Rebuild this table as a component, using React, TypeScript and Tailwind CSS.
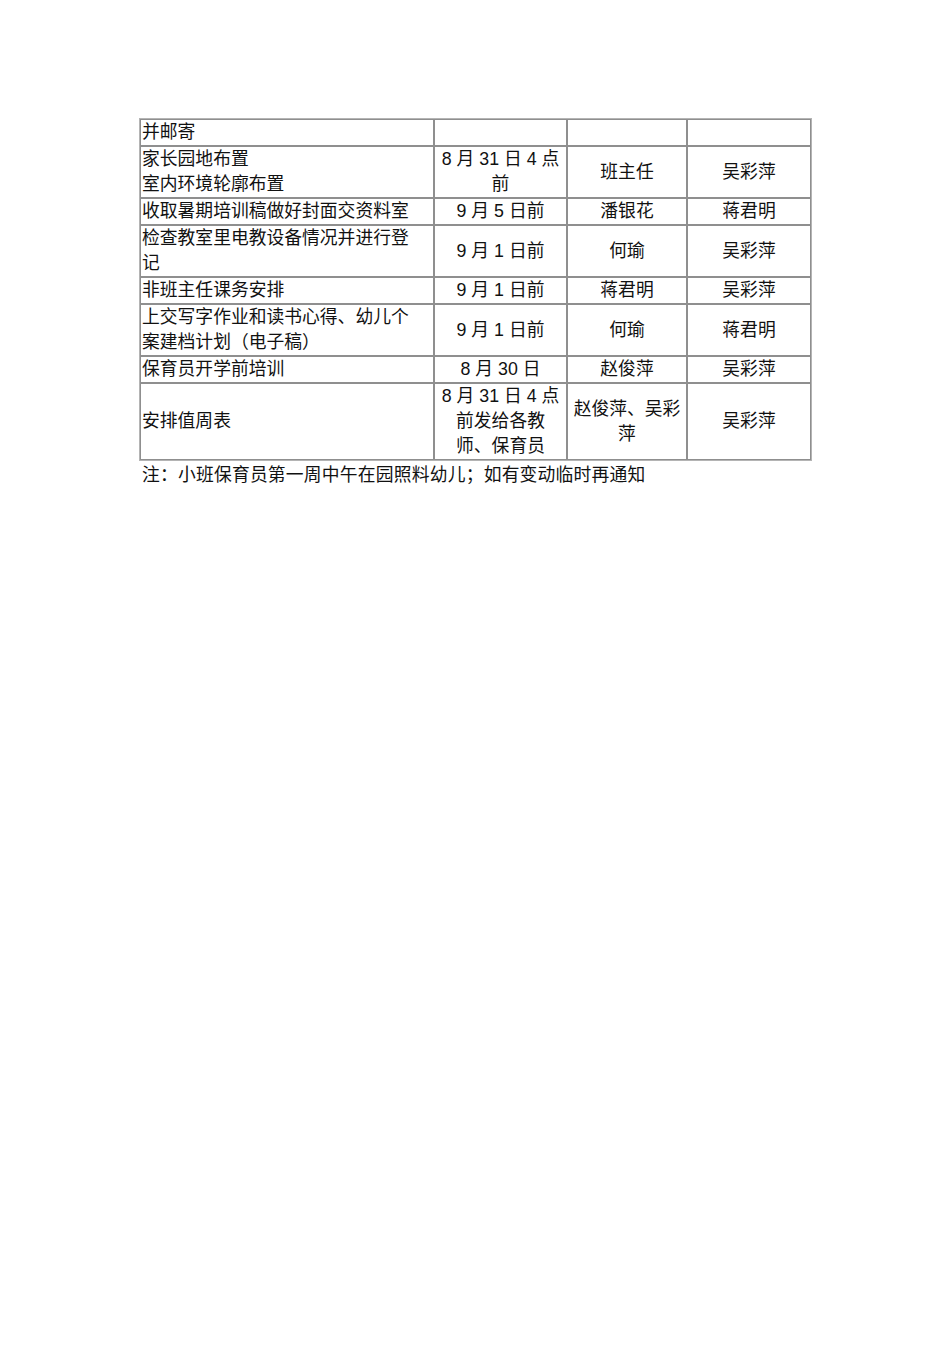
const rows: { task: string[]; time: string[]; owner: string[]; checker: string }[] = [
  { task: ['并邮寄'], time: [], owner: [], checker: '' },
  { task: ['家长园地布置', '室内环境轮廓布置'], time: ['8 月 31 日 4 点', '前'], owner: ['班主任'], checker: '吴彩萍' },
  { task: ['收取暑期培训稿做好封面交资料室'], time: ['9 月 5 日前'], owner: ['潘银花'], checker: '蒋君明' },
  { task: ['检查教室里电教设备情况并进行登', '记'], time: ['9 月 1 日前'], owner: ['何瑜'], checker: '吴彩萍' },
  { task: ['非班主任课务安排'], time: ['9 月 1 日前'], owner: ['蒋君明'], checker: '吴彩萍' },
  { task: ['上交写字作业和读书心得、幼儿个', '案建档计划（电子稿）'], time: ['9 月 1 日前'], owner: ['何瑜'], checker: '蒋君明' },
  { task: ['保育员开学前培训'], time: ['8 月 30 日'], owner: ['赵俊萍'], checker: '吴彩萍' },
  { task: ['安排值周表'], time: ['8 月 31 日 4 点', '前发给各教', '师、保育员'], owner: ['赵俊萍、吴彩', '萍'], checker: '吴彩萍' },
];

function Lines({ lines }: { lines: string[] }) {
  return (
    <>
      {lines.map((l, i) => (
        <div key={i}>{l}</div>
      ))}
    </>
  );
}

export default function App() {
  const cell = 'border border-[#8f8f8f] p-0 align-middle whitespace-nowrap';
  return (
    <div
      className="min-h-[1345px] bg-white pl-[139px] pt-[118px] text-[17.8px] leading-[25px] text-[#111]"
      style={{ fontFamily: '"Liberation Sans", "Noto Sans CJK SC", sans-serif' }}
    >
      <table className="w-[671px] table-fixed border-separate border-spacing-0 border border-[#b4b4b4]">
        <colgroup>
          <col className="w-[294px]" />
          <col className="w-[133px]" />
          <col className="w-[120px]" />
          <col className="w-[124px]" />
        </colgroup>
        <tbody>
          {rows.map((r, i) => (
            <tr key={i}>
              <td className={`${cell} pl-[1px] text-left`}>
                <Lines lines={r.task} />
              </td>
              <td className={`${cell} text-center`}>
                <Lines lines={r.time} />
              </td>
              <td className={`${cell} text-center`}>
                <Lines lines={r.owner} />
              </td>
              <td className={`${cell} text-center`}>{r.checker}</td>
            </tr>
          ))}
        </tbody>
      </table>
      <p className="mt-[2px] pl-[3px] tracking-[0.2px]">注：小班保育员第一周中午在园照料幼儿；如有变动临时再通知</p>
    </div>
  );
}
